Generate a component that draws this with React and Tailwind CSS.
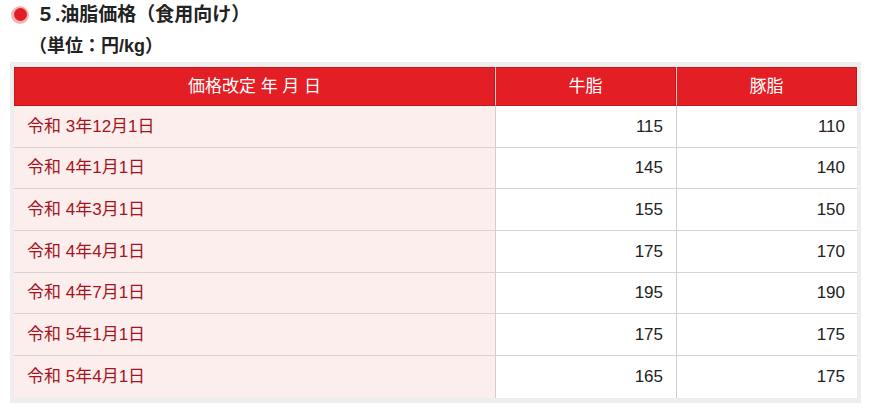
const rows = [
  ['令和 3年12月1日', 115, 110],
  ['令和 4年1月1日', 145, 140],
  ['令和 4年3月1日', 155, 150],
  ['令和 4年4月1日', 175, 170],
  ['令和 4年7月1日', 195, 190],
  ['令和 5年1月1日', 175, 175],
  ['令和 5年4月1日', 165, 175],
];

const font = { fontFamily: '"Liberation Sans", "Noto Sans CJK JP", sans-serif' };

export default function App() {
  return (
    <div className="w-[870px] h-[409px] bg-white overflow-hidden" style={font}>
      <div className="flex items-center h-[28px] pl-[11px] pt-[1px]">
        <span className="w-[18px] h-[18px] rounded-full bg-[#f3b4b4] flex items-center justify-center">
          <span className="w-[13px] h-[13px] rounded-full bg-[#e11d26]" />
        </span>
        <h2 className="ml-[7px] text-[19px] font-bold text-[#222] leading-none">５.油脂価格（食用向け）</h2>
      </div>
      <p className="mt-[9px] ml-[29px] text-[18px] font-bold text-[#222] leading-none">（単位：円/kg）</p>

      <div className="mt-[7px] ml-[10px] w-[851px] bg-[#eeeeee] pt-[5px] pb-[5px] pl-[4px] pr-[4px]">
        <div className="grid grid-cols-[481px_181px_181px] h-[39px] text-white text-[17px]">
          <div className="bg-[#e31e24] border border-[#c5161c] flex items-center justify-center">価格改定 年 月 日</div>
          <div className="bg-[#e31e24] border border-[#c5161c] border-l-[#f2c8c8] flex items-center justify-center">牛脂</div>
          <div className="bg-[#e31e24] border border-[#c5161c] border-l-[#f2c8c8] flex items-center justify-center">豚脂</div>
        </div>
        {rows.map(([d, a, b], i) => (
          <div key={i} className="grid grid-cols-[481px_181px_181px] h-[41.7px] text-[17px] border-b border-[#d4d4d4] last:border-b-0">
            <div className="bg-[#fdeeee] text-[#a3141c] flex items-center pl-[13px]">{d}</div>
            <div className="bg-white text-[#222] border-l border-[#cfcfcf] flex items-center justify-end pr-[13px]">{a}</div>
            <div className="bg-white text-[#222] border-l border-[#cfcfcf] flex items-center justify-end pr-[12px]">{b}</div>
          </div>
        ))}
      </div>
    </div>
  );
}
